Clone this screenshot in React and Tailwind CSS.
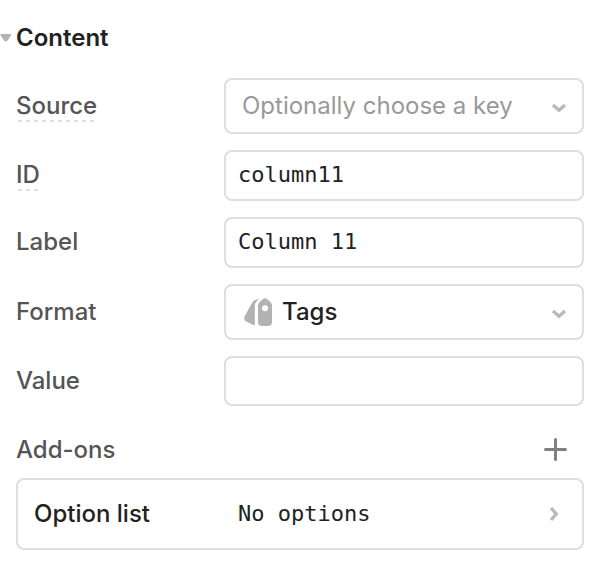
const boxStyle =
  "block w-full rounded-lg border-2 border-[#dedede] bg-white text-[#222] outline-none focus:border-[#9a9a9a]";
const monoStyle = "font-['DejaVu_Sans_Mono',monospace] text-[22px]";
const hintStyle =
  "bg-[linear-gradient(to_right,transparent_2px,#dedede_2px,#dedede_6px,transparent_6px)] bg-[length:8px_2px] bg-bottom-left bg-repeat-x pb-[2px]";

function Chevron({ className }) {
  return (
    <svg
      className={className}
      width="16"
      height="16"
      viewBox="0 0 16 16"
      fill="none"
      stroke="#bababa"
      strokeWidth="3.4"
      aria-hidden="true"
    >
      <path d="M2 5 8 10.2 14 5" />
    </svg>
  );
}

function TagsIcon({ className }) {
  return (
    <svg className={className} width="28" height="28" viewBox="0 0 28 28" fill="#b3b3b3" aria-hidden="true">
      <path d="M15.2 1 12.6 3.6Q10.8 5.4 10.8 8V27.2L9.4 27 2.2 23.6Q-.8 22 .4 18.8L7.6 5.6Q8.8 3.2 10.8 2.2 12.6 1.2 15.2 1Z" />
      <path
        fillRule="evenodd"
        d="M19.2.8Q21 -.5 22.8.8L26.6 4.2Q28 5.6 28 7.6V24Q28 28 24 28H18Q14 28 14 24V7.6Q14 5.6 15.4 4.2ZM21 7.2a3 3 0 1 0 0 6 3 3 0 0 0 0-6Z"
      />
    </svg>
  );
}

function Field({ id, label, hint, children }) {
  return (
    <div className="grid grid-cols-[208px_1fr] items-center">
      <label htmlFor={id} className="pb-px leading-7 text-[#555]">
        <span className={hint ? hintStyle : ""}>{label}</span>
      </label>
      <div className="relative">{children}</div>
    </div>
  );
}

export default function App() {
  return (
    <main className="bg-white pt-5 pb-5 font-['Inter',sans-serif] text-2xl font-medium text-[#222]">
      <h2>
        <button type="button" className="flex h-9 items-center gap-[5px] font-semibold" aria-expanded="true">
          <svg width="11" height="8" viewBox="0 0 11 8" fill="#b3b3b3" aria-hidden="true">
            <path d="M1.2 0H10.4Q11.6.2 10.8 1.8L7.6 6.4Q5.8 8.4 4 6.4L.8 1.8Q0 .2 1.2 0Z" />
          </svg>
          Content
        </button>
      </h2>

      <div className="mt-[22px] flex flex-col gap-4 pr-[22px] pl-4">
        <Field id="source" label="Source" hint>
          <select
            id="source"
            defaultValue=""
            className={`${boxStyle} h-14 appearance-none pr-12 pl-4 font-normal text-[#999]`}
          >
            <option value="">Optionally choose a key</option>
          </select>
          <Chevron className="pointer-events-none absolute top-[22px] right-[17px]" />
        </Field>
        <Field id="column-id" label="ID" hint>
          <input id="column-id" defaultValue="column11" className={`${boxStyle} ${monoStyle} h-[51px] px-3 pb-[2px] font-normal`} />
        </Field>
        <Field id="column-label" label="Label">
          <input id="column-label" defaultValue="Column 11" className={`${boxStyle} ${monoStyle} h-[51px] px-3 pb-[2px] font-normal`} />
        </Field>
        <Field id="format" label="Format">
          <select id="format" className={`${boxStyle} h-14 appearance-none pr-12 pl-14`}>
            <option>Tags</option>
          </select>
          <TagsIcon className="pointer-events-none absolute top-[14px] left-5" />
          <Chevron className="pointer-events-none absolute top-[22px] right-[17px]" />
        </Field>
        <Field id="value" label="Value">
          <input id="value" className={`${boxStyle} ${monoStyle} h-[50px] px-3 pb-[2px] font-normal`} />
        </Field>
      </div>

      <section className="mt-6 pr-[22px] pl-4">
        <div className="flex h-10 items-center justify-between pr-4">
          <h3 className="text-[#555]">Add-ons</h3>
          <button type="button" aria-label="Add add-on">
            <svg width="24" height="24" viewBox="0 0 24 24" stroke="#808080" strokeWidth="3" strokeLinecap="round" aria-hidden="true">
              <path d="M11.5 1.5v20M1.5 11.5h20" />
            </svg>
          </button>
        </div>
        <button
          type="button"
          className="mt-2 grid h-[72px] w-full grid-cols-[204px_1fr_16px] items-center rounded-lg border-2 border-[#dedede] bg-white pr-5 pl-4 text-left"
        >
          <span>Option list</span>
          <span className={`${monoStyle} font-normal`}>No options</span>
          <Chevron className="-rotate-90" />
        </button>
      </section>
    </main>
  );
}
